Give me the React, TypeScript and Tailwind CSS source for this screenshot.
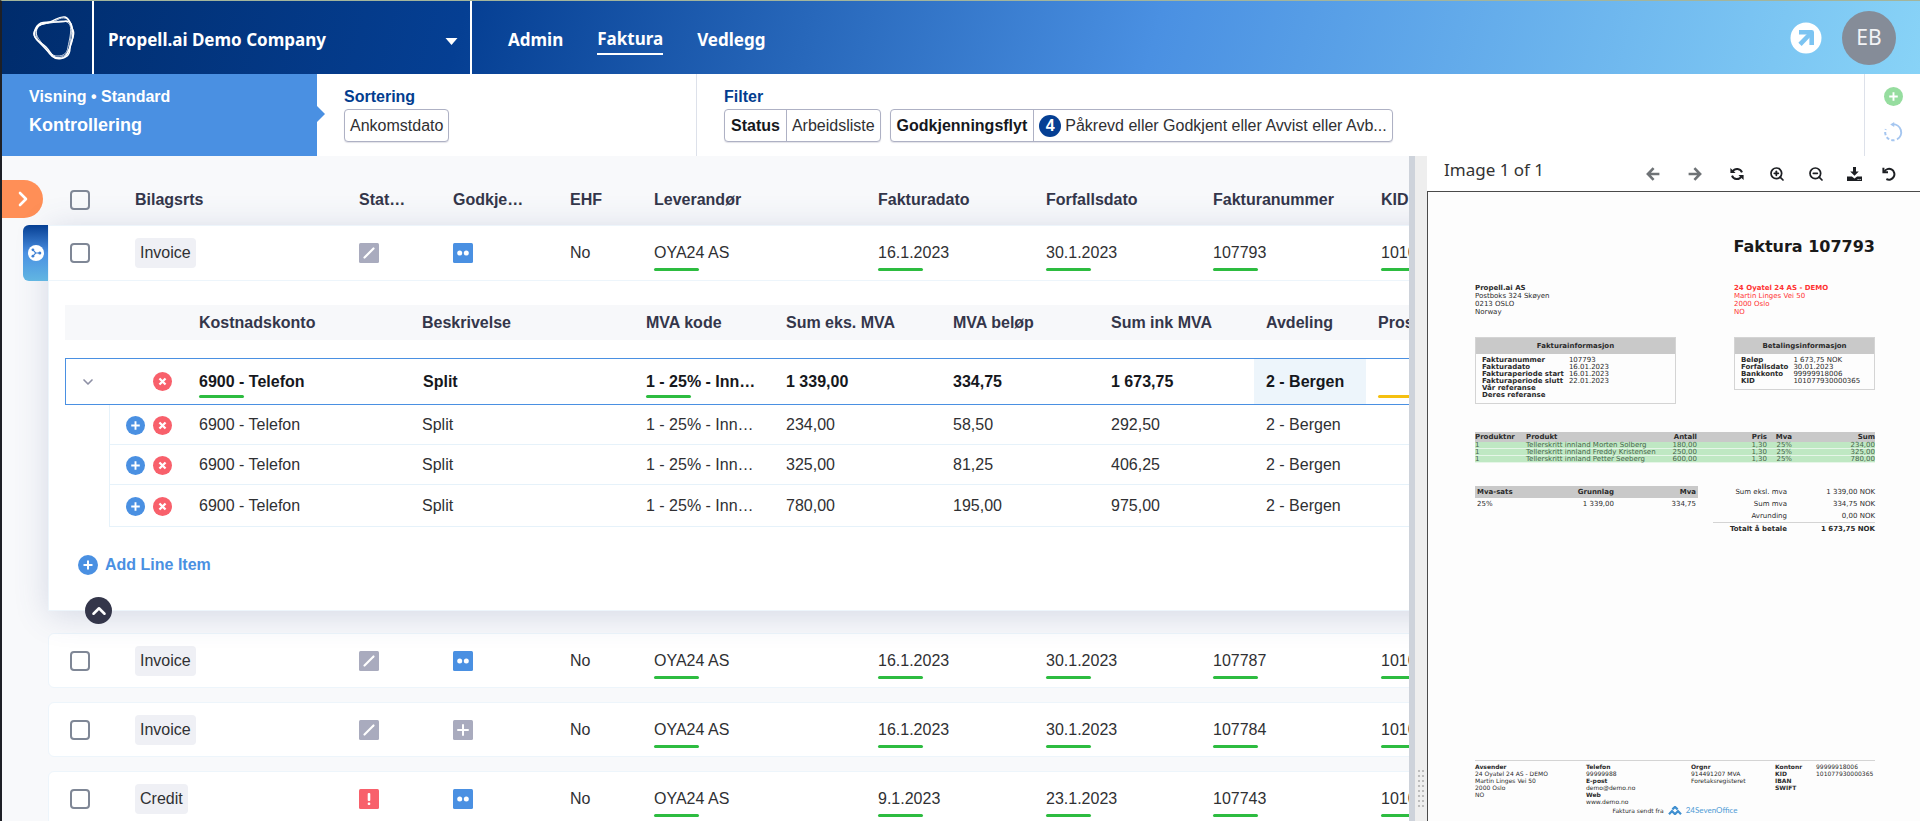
import type { ReactNode } from "react";
import { ChevronDown, ChevronRight, ChevronUp, ZoomIn, ZoomOut } from "lucide-react";

const rowCols =
  "grid grid-cols-[86px_224px_94px_117px_84px_224px_168px_167px_168px_200px]";
const lineCols =
  "grid grid-cols-[121px_223px_224px_140px_167px_158px_155px_112px_200px]";
const subLineCols =
  "grid grid-cols-[76px_223px_224px_140px_167px_158px_155px_112px_200px]";

const headers = [
  "Bilagsrts",
  "Stat…",
  "Godkje…",
  "EHF",
  "Leverandør",
  "Fakturadato",
  "Forfallsdato",
  "Fakturanummer",
  "KID",
];

const lineHeaders = [
  "Kostnadskonto",
  "Beskrivelse",
  "MVA kode",
  "Sum eks. MVA",
  "MVA beløp",
  "Sum ink MVA",
  "Avdeling",
  "Prosjekt",
];

type Mark = "slash" | "dots" | "plus" | "alert";

type Row = {
  type: string;
  status: Mark;
  flow: Mark;
  values: string[];
};

const rows: Row[] = [
  {
    type: "Invoice",
    status: "slash",
    flow: "dots",
    values: ["OYA24 AS", "16.1.2023", "30.1.2023", "107793", "101077930000365"],
  },
  {
    type: "Invoice",
    status: "slash",
    flow: "dots",
    values: ["OYA24 AS", "16.1.2023", "30.1.2023", "107787", "101077870000365"],
  },
  {
    type: "Invoice",
    status: "slash",
    flow: "plus",
    values: ["OYA24 AS", "16.1.2023", "30.1.2023", "107784", "101077840000365"],
  },
  {
    type: "Credit",
    status: "alert",
    flow: "dots",
    values: ["OYA24 AS", "9.1.2023", "23.1.2023", "107743", "101077430000365"],
  },
];

const subLines = [
  ["6900 - Telefon", "Split", "1 - 25% - Inn…", "234,00", "58,50", "292,50", "2 - Bergen"],
  ["6900 - Telefon", "Split", "1 - 25% - Inn…", "325,00", "81,25", "406,25", "2 - Bergen"],
  ["6900 - Telefon", "Split", "1 - 25% - Inn…", "780,00", "195,00", "975,00", "2 - Bergen"],
];

function Logo() {
  return (
    <svg viewBox="0 0 44 46" className="h-[46px] w-11" fill="none" stroke="#fff">
      <path
        strokeWidth="1.4"
        d="M5 13C7 8 12 9 18 7C24 5 27 1 33 2C39 4 38 10 41 15C44 21 38 26 38 33C38 40 34 44 27 43C20 43 19 37 14 32C9 27 4 26 2 20C1 17 3 15 5 13Z"
      />
      <path
        strokeWidth="1.6"
        d="M9 8C17 6 28 8 34 6C40 6 40 12 41 18C41 27 38 33 35 39C32 45 24 45 20 41C14 34 10 30 5 25C0 20 3 11 9 8Z"
      />
      <path
        strokeWidth="1"
        opacity=".8"
        d="M6 11C11 8 18 9 25 5C31 1 37 3 39 9C41 16 38 24 38 31C37 38 33 42 25 43C18 43 16 36 12 31C7 24 1 19 6 11Z"
      />
      <path
        strokeWidth="1"
        opacity=".8"
        d="M5 14C7 8 15 9 24 7C30 5 36 6 38 10C40 16 37 26 36 32C35 39 31 41 26 41C20 42 15 34 10 30C5 26 3 20 5 14Z"
      />
    </svg>
  );
}

function ArrowIcon({ className }: { className?: string }) {
  return (
    <svg viewBox="0 0 14 14" className={`size-[14px] ${className ?? ""}`} fill="none" stroke="currentColor" strokeWidth="2.6">
      <path d="M7.6 1.2L1.9 7l5.7 5.8M2.4 7H13.4" />
    </svg>
  );
}

function RefreshIcon() {
  return (
    <svg viewBox="0 0 14 14" className="size-[14px]" fill="none" stroke="currentColor" strokeWidth="2">
      <path d="M2.6 4.6A5.2 5.2 0 0 1 12 5.4M11.4 9.4A5.2 5.2 0 0 1 2 8.6" />
      <path d="M.4.9v5.2h5.2zM13.6 13.1V7.9H8.4z" fill="currentColor" stroke="none" />
    </svg>
  );
}

function UndoIcon() {
  return (
    <svg viewBox="0 0 14 14" className="size-[14px]" fill="none" stroke="currentColor" strokeWidth="2">
      <path d="M2.2 4.8A5.4 5.4 0 1 1 4.4 12" />
      <path d="M1.4 .8V5.2H6" />
    </svg>
  );
}

function DownloadIcon() {
  return (
    <svg viewBox="0 0 15 14" className="h-[14px] w-[15px]" fill="currentColor">
      <path d="M6 0h3v4.4h2.8L7.5 8.8 3.2 4.4H6z" />
      <path d="M0 9.4h4.9l2.6 2 2.6-2H15V14H0zm10.6 2.5v1h1v-1zm2 0v1h1v-1z" fillRule="evenodd" />
    </svg>
  );
}

function MarkIcon({ mark }: { mark: Mark }) {
  const fill = { slash: "#a9abbe", plus: "#a9abbe", dots: "#4a90e2", alert: "#f8606b" }[mark];
  return (
    <svg viewBox="0 0 20 20" className="size-5">
      <rect width="20" height="20" rx="1.5" fill={fill} />
      {mark === "slash" && (
        <path d="M5.5 14.5L14.5 5.5" stroke="#fff" strokeWidth="2.2" strokeLinecap="round" />
      )}
      {mark === "plus" && (
        <path d="M10 5v10M5 10h10" stroke="#fff" strokeWidth="2" strokeLinecap="round" />
      )}
      {mark === "dots" && (
        <g fill="#fff">
          <circle cx="6.7" cy="10" r="2.5" />
          <circle cx="13.3" cy="10" r="2.5" />
        </g>
      )}
      {mark === "alert" && (
        <g fill="#fff">
          <rect x="8.7" y="4" width="2.6" height="8" rx="1" />
          <rect x="8.7" y="13.5" width="2.6" height="2.6" rx="1" />
        </g>
      )}
    </svg>
  );
}

function PlusCircle({ className }: { className: string }) {
  return (
    <svg viewBox="0 0 20 20" className={className}>
      <circle cx="10" cy="10" r="10" fill="currentColor" />
      <path d="M10 5.5v9M5.5 10h9" stroke="#fff" strokeWidth="2" />
    </svg>
  );
}

function AddButton() {
  return (
    <button aria-label="Add line">
      <PlusCircle className="size-[19px] text-[#4a90e2]" />
    </button>
  );
}

function DeleteButton() {
  return (
    <button aria-label="Delete line">
      <svg viewBox="0 0 20 20" className="size-[19px]">
        <circle cx="10" cy="10" r="10" fill="#f8606b" />
        <path d="M6.8 6.8l6.4 6.4M13.2 6.8l-6.4 6.4" stroke="#fff" strokeWidth="2.4" />
      </svg>
    </button>
  );
}

function Checkbox({ label }: { label: string }) {
  return (
    <input
      type="checkbox"
      aria-label={label}
      className="size-5 appearance-none rounded border-2 border-[#7f8796] checked:bg-[#4a90e2]"
    />
  );
}

function InvoiceRow({ row, open }: { row: Row; open?: boolean }) {
  return (
    <tr
      className={`${rowCols} bg-white border border-[#edf5fb] ${
        open ? "h-14" : "h-[55px] mb-[14px] rounded-md"
      }`}
    >
      <td className="flex items-center pl-[21px]">
        <Checkbox label={`Select ${row.values[3]}`} />
      </td>
      <td className="flex items-center">
        <span className="rounded bg-[#eff0f5] px-[5px] leading-[30px]">{row.type}</span>
      </td>
      <td className="flex items-center">
        <MarkIcon mark={row.status} />
      </td>
      <td className="flex items-center">
        <MarkIcon mark={row.flow} />
      </td>
      <td className="pt-[15px] leading-6">No</td>
      {row.values.map((value) => (
        <td key={value} className="pt-[15px] leading-6">
          {value}
          <div className="mt-[3px] h-[3px] w-[45px] rounded-full bg-[#2dbc40]" />
        </td>
      ))}
    </tr>
  );
}

function LineItems() {
  return (
    <table className="block">
      <thead className="block">
        <tr className={`${lineCols} h-[35px] items-center bg-[#f7f8fa] text-left text-[#34364a]`}>
          <td />
          {lineHeaders.map((header) => (
            <th key={header} className="pl-[13px]">
              {header}
            </th>
          ))}
        </tr>
      </thead>
      <tbody className="block pt-[18px]">
        <tr className={`${lineCols} h-[47px] border border-[#4a90e2] font-bold leading-6 text-[#16181d]`}>
          <td className="flex items-center justify-between pl-[14px] pr-[15px]">
            <button aria-label="Collapse line">
              <ChevronDown className="size-4 text-[#8d90a5]" strokeWidth={2.5} />
            </button>
            <DeleteButton />
          </td>
          <td className="pl-3 pt-[11px]">
            6900 - Telefon
            <div className="mt-px h-[3px] w-[45px] rounded-full bg-[#2dbc40]" />
          </td>
          <td className="pl-[13px] pt-[11px]">Split</td>
          <td className="pl-3 pt-[11px]">
            1 - 25% - Inn…
            <div className="mt-px h-[3px] w-[45px] rounded-full bg-[#2dbc40]" />
          </td>
          <td className="pl-3 pt-[11px]">1 339,00</td>
          <td className="pl-3 pt-[11px]">334,75</td>
          <td className="pl-3 pt-[11px]">1 673,75</td>
          <td className="bg-[#edf5fb] pl-3 pt-[11px]">2 - Bergen</td>
          <td className="pl-3 pt-9">
            <div className="h-[3px] w-[45px] rounded-full bg-[#f5c010]" />
          </td>
        </tr>
        {subLines.map((line) => (
          <tr
            key={line[3]}
            className={`${subLineCols} ml-11 h-10 items-center border-b border-l border-[#e6f2fa] pt-px last:h-[42px]`}
          >
            <td className="flex justify-end gap-2 pr-[14px]">
              <AddButton />
              <DeleteButton />
            </td>
            {line.map((value, i) => (
              <td key={i} className="pl-[13px]">
                {value}
              </td>
            ))}
          </tr>
        ))}
      </tbody>
    </table>
  );
}

function Chip({ name, children }: { name?: string; children: ReactNode }) {
  return (
    <button className="flex h-[33px] items-center rounded border border-[#aeb1c4] bg-white text-[#2f3033] shadow-[0_1px_1px_rgba(60,60,100,0.15)]">
      {name && (
        <span className="border-r border-[#aeb1c4] px-[6px] leading-[31px] font-bold text-[#16181d]">
          {name}
        </span>
      )}
      <span className="flex items-center gap-1 px-[5px]">{children}</span>
    </button>
  );
}

function Header() {
  return (
    <header className="flex h-[73px] shrink-0 items-stretch bg-[linear-gradient(105deg,#002c6c,#053f93_24%,#4a90e2_60%,#88d3f7)] font-['Noto_Sans',sans-serif] text-[17px] font-bold text-white">
      <a
        href="#"
        aria-label="Home"
        className="flex w-[92px] items-center justify-end border-r-2 border-white pr-4"
      >
        <Logo />
      </a>
      <div className="grid w-[378px] items-center border-r-2 border-white">
        <select
          aria-label="Company"
          className="col-start-1 row-start-1 h-full w-full appearance-none bg-transparent pl-[14px] pt-1 outline-none"
        >
          <option>Propell.ai Demo Company</option>
        </select>
        <svg
          viewBox="0 0 12 7"
          className="pointer-events-none col-start-1 row-start-1 mr-3 mt-2 h-[7px] w-[13px] justify-self-end"
        >
          <path d="M0 0h12L6 7z" fill="#fff" />
        </svg>
      </div>
      <nav className="flex flex-1 items-center gap-[34px] pl-9 pt-1">
        <a href="#">Admin</a>
        <a href="#" className="-mb-px border-b-2 border-white leading-7">
          Faktura
        </a>
        <a href="#">Vedlegg</a>
      </nav>
      <div className="flex items-center gap-5 pr-6">
        <button aria-label="Open">
          <svg viewBox="0 0 32 32" className="size-8" fill="none">
            <circle cx="16" cy="16" r="15.5" fill="#fff" />
            <path d="M9 10.3H21.7V23" stroke="#7cc4f2" strokeWidth="4.6" strokeLinejoin="round" />
            <path d="M21 11L10 22.3" stroke="#7cc4f2" strokeWidth="4.6" />
          </svg>
        </button>
        <button className="size-[54px] rounded-full bg-[#858c98] text-[21px] font-normal text-[#f2f3f5]">
          EB
        </button>
      </div>
    </header>
  );
}

function FilterBar() {
  return (
    <div className="flex h-[82px] shrink-0 bg-white text-[#033d8f]">
      <button className="relative flex w-[315px] flex-col gap-[3px] bg-[#4a90e2] pl-[27px] pt-3 text-left font-bold text-white">
        <span className="leading-[22px]">Visning • Standard</span>
        <span className="text-lg leading-7">Kontrollering</span>
        <svg viewBox="0 0 8 16" className="absolute -right-2 top-8 h-4 w-2">
          <path d="M0 0l8 8-8 8z" fill="#4a90e2" />
        </svg>
      </button>
      <div className="w-[380px] border-r border-[#dde1ea] pl-[27px] pt-3">
        <div className="mb-px font-bold leading-[22px]">Sortering</div>
        <div className="flex">
          <Chip>Ankomstdato</Chip>
        </div>
      </div>
      <div className="flex-1 pl-[27px] pt-3">
        <div className="mb-px font-bold leading-[22px]">Filter</div>
        <div className="flex gap-[9px]">
          <Chip name="Status">Arbeidsliste</Chip>
          <Chip name="Godkjenningsflyt">
            <span className="size-[22px] rounded-full bg-[#053f93] text-center font-bold leading-[22px] text-white">
              4
            </span>
            Påkrevd eller Godkjent eller Avvist eller Avb...
          </Chip>
        </div>
      </div>
      <div className="flex w-14 flex-col items-center gap-4 border-l border-[#dde1ea] pl-px pt-[13px]">
        <button aria-label="Add view">
          <PlusCircle className="size-[19px] text-[#96dd9f]" />
        </button>
        <button aria-label="Reset view">
          <svg viewBox="0 0 20 20" className="size-5" fill="none" stroke="#a5c6f0" strokeWidth="2">
            <path d="M9.5 2.4A8 8 0 0 1 14 17.4" />
            <path d="M11.5 18.2A8 8 0 0 1 2.8 7.2" strokeDasharray="3.2 2.2" />
            <path d="M7.2 2.4L11.2 0v5z" fill="#a5c6f0" stroke="none" />
          </svg>
        </button>
      </div>
    </div>
  );
}

function InvoiceList() {
  return (
    <main className="relative min-w-0 flex-1 overflow-hidden bg-[#f8f9fb] pl-[46px] text-[#2f3033]">
      <button
        aria-label="Open menu"
        className="absolute left-0 top-6 flex h-[38px] w-[41px] items-center justify-center rounded-r-full bg-[#ff8f57] text-white"
      >
        <ChevronRight className="size-6" strokeWidth={2.6} />
      </button>
      <table className="block w-[1534px]">
        <thead className="block pt-[19px]">
          <tr className={`${rowCols} h-[50px] items-center border-x border-transparent text-left text-[#34364a]`}>
            <td className="flex pl-[21px]">
              <Checkbox label="Select all" />
            </td>
            {headers.map((header) => (
              <th key={header}>{header}</th>
            ))}
          </tr>
        </thead>
        <tbody className="relative mb-[22px] block bg-white shadow-[0_4px_32px_rgba(70,85,140,0.2)]">
          <InvoiceRow row={rows[0]} open />
          <tr className="block h-[330px] border-b border-l border-[#edf5fb]">
            <td className="block pl-4 pt-6">
              <LineItems />
              <button className="mt-[26px] flex h-6 items-center gap-[7px] pl-[13px] font-bold text-[#4a90e2]">
                <PlusCircle className="size-5" />
                Add Line Item
              </button>
              <button
                aria-label="Related documents"
                className="absolute -left-[25px] top-0 flex h-14 w-[25px] items-center justify-center rounded-l-md bg-linear-to-b from-[#053f93] via-[#4a90e2] to-[#62b6e2]"
              >
                <svg viewBox="0 0 16 16" className="size-4">
                  <circle cx="8" cy="8" r="8" fill="#fff" />
                  <path d="M4.9 4.9L7.8 8L4.9 11.1M7.8 8H11.8" stroke="#3d7fd3" strokeWidth="1.1" fill="none" />
                  <g fill="#3d7fd3">
                    <circle cx="4.9" cy="4.8" r="1.4" />
                    <circle cx="4.9" cy="11.2" r="1.4" />
                    <circle cx="11.8" cy="8" r="1.5" />
                  </g>
                </svg>
              </button>
              <button
                aria-label="Collapse"
                className="absolute -bottom-[13px] left-[37px] flex size-[27px] items-center justify-center rounded-full bg-[#34364a] text-white"
              >
                <ChevronUp className="size-[22px]" strokeWidth={2.8} />
              </button>
            </td>
          </tr>
        </tbody>
        <tbody className="block">
          {rows.slice(1).map((row) => (
            <InvoiceRow key={row.values[3]} row={row} />
          ))}
        </tbody>
      </table>
    </main>
  );
}

function InfoBox({ title, labels, values }: { title: string; labels: string[]; values: string[] }) {
  return (
    <section className="border border-[#d4d4d4]">
      <h2 className="bg-[#c9c9c9] text-center font-bold leading-4">{title}</h2>
      <dl className="flex gap-[5px] px-[6px] pb-1 pt-[3px] leading-[7px]">
        <div className="font-bold">
          {labels.map((label) => (
            <dt key={label}>{label}</dt>
          ))}
        </div>
        <div>
          {values.map((value, i) => (
            <dd key={i}>{value}</dd>
          ))}
        </div>
      </dl>
    </section>
  );
}

function Document() {
  const products = [
    ["1", "Tellerskritt innland Morten Solberg", "180,00", "1,30", "25%", "234,00"],
    ["1", "Tellerskritt innland Freddy Kristensen", "250,00", "1,30", "25%", "325,00"],
    ["1", "Tellerskritt innland Petter Seeberg", "600,00", "1,30", "25%", "780,00"],
  ];
  const sums = [
    ["Sum eksl. mva", "1 339,00 NOK"],
    ["Sum mva", "334,75 NOK"],
    ["Avrunding", "0,00 NOK"],
  ];

  return (
    <article className="flex-1 overflow-hidden border-l border-t border-[#4a4a4a] bg-[#fdfdfd] pl-[47px] pr-[45px] pt-[43px] font-['DejaVu_Sans',sans-serif] text-[7px] leading-2 text-[#2b2b2b]">
      <h1 className="text-right text-base font-bold leading-6 text-[#1a1a1a]">Faktura 107793</h1>
      <div className="mt-[25px] grid grid-cols-[1fr_141px]">
        <address className="not-italic">
          <b>Propell.ai AS</b>
          <br />
          Postboks 324 Skøyen
          <br />
          0213 OSLO
          <br />
          Norway
        </address>
        <address className="not-italic text-[#f33]">
          <b>24 Oyatel 24 AS - DEMO</b>
          <br />
          Martin Linges Vei 50
          <br />
          2000 Oslo
          <br />
          NO
        </address>
      </div>
      <div className="mt-[21px] grid grid-cols-[201px_141px] items-start justify-between">
        <InfoBox
          title="Fakturainformasjon"
          labels={[
            "Fakturanummer",
            "Fakturadato",
            "Fakturaperiode start",
            "Fakturaperiode slutt",
            "Vår referanse",
            "Deres referanse",
          ]}
          values={["107793", "16.01.2023", "16.01.2023", "22.01.2023"]}
        />
        <InfoBox
          title="Betalingsinformasjon"
          labels={["Beløp", "Forfallsdato", "Bankkonto", "KID"]}
          values={["1 673,75 NOK", "30.01.2023", "99999918006", "101077930000365"]}
        />
      </div>
      <table className="mt-7 w-full table-fixed text-right">
        <thead>
          <tr className="bg-[#c9c9c9] leading-[10px]">
            <th className="w-[51px] text-left">Produktnr</th>
            <th className="text-left">Produkt</th>
            <th className="w-8">Antall</th>
            <th className="w-[70px]">Pris</th>
            <th className="w-[25px]">Mva</th>
            <th className="w-[83px]">Sum</th>
          </tr>
        </thead>
        <tbody className="leading-[6px] text-[#48664b]">
          {products.map((product) => (
            <tr key={product[1]} className="border-b border-[#e6f6e8] bg-[#bfe8c3]">
              {product.map((value, i) => (
                <td key={i} className={i < 2 ? "whitespace-nowrap text-left" : ""}>
                  {value}
                </td>
              ))}
            </tr>
          ))}
        </tbody>
      </table>
      <div className="mt-[23px] flex items-start justify-between leading-3">
        <table className="w-[223px] table-fixed text-right">
          <thead>
            <tr className="bg-[#c9c9c9]">
              <th className="pl-[2px] text-left">Mva-sats</th>
              <th className="w-16">Grunnlag</th>
              <th className="w-[84px] pr-[2px]">Mva</th>
            </tr>
          </thead>
          <tbody>
            <tr>
              <td className="pl-[2px] text-left">25%</td>
              <td>1 339,00</td>
              <td className="pr-[2px]">334,75</td>
            </tr>
          </tbody>
        </table>
        <table className="w-[162px] text-right">
          <tbody>
            {sums.map(([label, value]) => (
              <tr key={label}>
                <td className="w-[74px]">{label}</td>
                <td>{value}</td>
              </tr>
            ))}
            <tr className="border-t border-[#d4d4d4] font-bold leading-3">
              <td>Totalt å betale</td>
              <td>1 673,75 NOK</td>
            </tr>
          </tbody>
        </table>
      </div>
      <footer className="mt-[225px] border-t border-[#d4d4d4] text-[6px] leading-[7px]">
        <div className="grid grid-cols-[111px_105px_84px_41px_60px] whitespace-nowrap pt-[2px]">
          <div>
            <b>Avsender</b>
            <br />
            24 Oyatel 24 AS - DEMO
            <br />
            Martin Linges Vei 50
            <br />
            2000 Oslo
            <br />
            NO
          </div>
          <div>
            <b>Telefon</b>
            <br />
            99999988
            <br />
            <b>E-post</b>
            <br />
            demo@demo.no
            <br />
            <b>Web</b>
            <br />
            www.demo.no
          </div>
          <div>
            <b>Orgnr</b>
            <br />
            914491207 MVA
            <br />
            Foretaksregisteret
          </div>
          <div className="font-bold">
            Kontonr
            <br />
            KID
            <br />
            IBAN
            <br />
            SWIFT
          </div>
          <div>
            99999918006
            <br />
            101077930000365
          </div>
        </div>
        <div className="flex items-center justify-center gap-1">
          Faktura sendt fra
          <svg viewBox="0 0 14 9" className="h-[9px] w-[14px]">
            <path d="M4.4 3.4L7 .9L9.6 3.4M1 8.2L4 5L7 8.2L10 5L13 8.2" fill="none" stroke="#3f8fd0" strokeWidth="2.2" />
          </svg>
          <span className="font-['Lato',sans-serif] text-[8px] leading-[10px] text-[#4f9bd5]">
            24SevenOffice
          </span>
        </div>
      </footer>
    </article>
  );
}

function Viewer() {
  return (
    <aside className="flex w-[493px] shrink-0 flex-col bg-white">
      <div className="flex h-[35px] shrink-0 items-center pr-4 text-[#1d1f23]">
        <span className="mb-[7px] mr-auto pl-[17px] font-['Noto_Sans',sans-serif] text-[17px] text-[#333]">
          Image 1 of 1
        </span>
        <button aria-label="Previous" className="flex w-[42px] justify-center text-[#6f7376]">
          <ArrowIcon />
        </button>
        <button aria-label="Next" className="flex w-[42px] justify-center text-[#6f7376]">
          <ArrowIcon className="-scale-x-100" />
        </button>
        <button aria-label="Refresh" className="flex w-[41px] justify-center">
          <RefreshIcon />
        </button>
        <button aria-label="Zoom in" className="flex w-[39px] justify-center">
          <ZoomIn className="size-4" strokeWidth={2.6} />
        </button>
        <button aria-label="Zoom out" className="flex w-[39px] justify-center">
          <ZoomOut className="size-4" strokeWidth={2.6} />
        </button>
        <button aria-label="Download" className="flex w-[39px] justify-center">
          <DownloadIcon />
        </button>
        <button aria-label="Undo" className="flex w-[30px] justify-center">
          <UndoIcon />
        </button>
      </div>
      <Document />
    </aside>
  );
}

export default function App() {
  return (
    <div className="flex h-screen flex-col overflow-hidden border-l-2 border-t border-l-[#1e2026] border-t-[#a3b59c] font-['Liberation_Sans',Arial,sans-serif] text-base">
      <Header />
      <FilterBar />
      <div className="flex min-h-0 flex-1">
        <InvoiceList />
        <div className="flex w-[18px] shrink-0 cursor-col-resize items-end justify-center border-l-[6px] border-[#ced3db] bg-[#eeeeee] pb-[14px]">
          <div className="grid grid-cols-2 gap-x-[2px] gap-y-[3px]">
            {Array.from({ length: 16 }, (_, i) => (
              <span key={i} className="size-[2px] bg-[#bdbdbd]" />
            ))}
          </div>
        </div>
        <Viewer />
      </div>
    </div>
  );
}
